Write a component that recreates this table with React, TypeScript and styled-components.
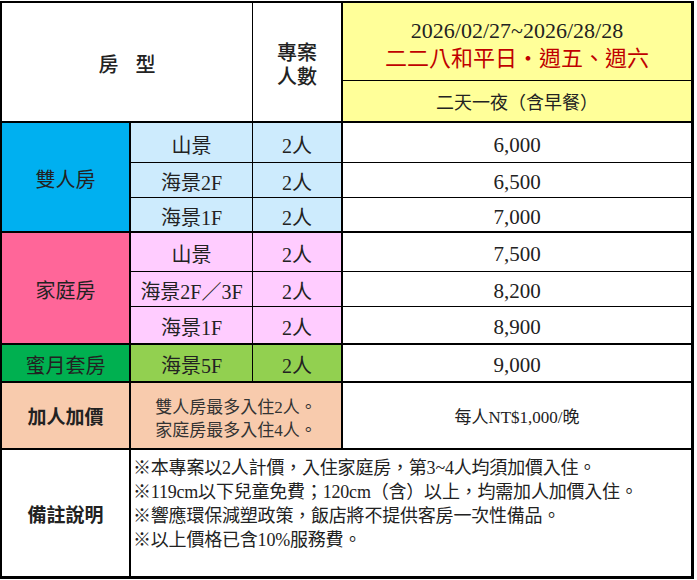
import React from "react";
import styled, { createGlobalStyle } from "styled-components";

const Global = createGlobalStyle`
  html, body { margin: 0; padding: 0; background: #fff; }
  body { font-family: "Liberation Serif", "Noto Sans CJK TC", serif; color: #222; }
`;

const Table = styled.div`
  display: grid;
  grid-template-columns: 129px 122px 90px 348px;
  grid-template-rows: 78px 42px 40px 35px 35px 39px 35px 38px 38px 67px 126px;
  width: max-content;
  margin-top: 1px;
  border-style: solid;
  border-color: #000;
  border-width: 2px 3px 3px 2px;
  background: #fff;
`;

type CellProps = {
  $area: string;
  $bg?: string;
  $bb?: number;
  $br?: number;
  $size?: number;
  $weight?: number;
};

const Cell = styled.div<CellProps>`
  grid-area: ${(p) => p.$area};
  box-sizing: border-box;
  display: flex;
  flex-direction: column;
  align-items: center;
  justify-content: center;
  text-align: center;
  padding-top: 6px;
  background: ${(p) => p.$bg ?? "#fff"};
  border-right: ${(p) => p.$br ?? 0}px solid #000;
  border-bottom: ${(p) => p.$bb ?? 0}px solid #000;
  font-size: ${(p) => p.$size ?? 20}px;
  font-weight: ${(p) => p.$weight ?? 400};
  line-height: 1.2;
  white-space: nowrap;
`;

const TitleText = styled.span`
  letter-spacing: 17px;
  padding-left: 17px;
  font-weight: 500;
`;

const StackText = styled.span`
  display: block;
  line-height: 24px;
  font-weight: 500;
`;

const DateLine = styled.div<{ $red?: boolean }>`
  font-size: 22px;
  line-height: 28px;
  color: ${(p) => (p.$red ? "#c00000" : "#222")};
`;

const AddText = styled.div`
  font-size: 17px;
  line-height: 23px;
  color: #333;
`;

const NoteCell = styled(Cell)`
  align-items: flex-start;
  justify-content: flex-start;
  text-align: left;
  padding: 6px 0 0 2px;
`;

const NoteLine = styled.div`
  font-size: 18px;
  line-height: 24px;
  letter-spacing: -0.2px;
  color: #222;
`;

const COLORS = {
  blue: "#00b0f0",
  blueLight: "#cdebfd",
  pink: "#ff6699",
  pinkLight: "#ffccff",
  green: "#00b050",
  greenLight: "#92d050",
  orange: "#f8cbad",
  yellow: "#ffff99",
};

type Room = { name: string; price: string };
type Group = { label: string; main: string; light: string; rooms: Room[] };

const groups: Group[] = [
  {
    label: "雙人房",
    main: COLORS.blue,
    light: COLORS.blueLight,
    rooms: [
      { name: "山景", price: "6,000" },
      { name: "海景2F", price: "6,500" },
      { name: "海景1F", price: "7,000" },
    ],
  },
  {
    label: "家庭房",
    main: COLORS.pink,
    light: COLORS.pinkLight,
    rooms: [
      { name: "山景", price: "7,500" },
      { name: "海景2F／3F", price: "8,200" },
      { name: "海景1F", price: "8,900" },
    ],
  },
  {
    label: "蜜月套房",
    main: COLORS.green,
    light: COLORS.greenLight,
    rooms: [{ name: "海景5F", price: "9,000" }],
  },
];

const notes = [
  "※本專案以2人計價，入住家庭房，第3~4人均須加價入住。",
  "※119cm以下兒童免費；120cm（含）以上，均需加人加價入住。",
  "※響應環保減塑政策，飯店將不提供客房一次性備品。",
  "※以上價格已含10%服務費。",
];

export default function App() {
  let row = 3;
  const body: React.ReactNode[] = [];
  groups.forEach((g, gi) => {
    const start = row;
    const end = row + g.rooms.length;
    body.push(
      <Cell key={`g${gi}`} $area={`${start} / 1 / ${end} / 2`} $bg={g.main} $br={2} $bb={2}>
        {g.label}
      </Cell>
    );
    g.rooms.forEach((r, ri) => {
      const last = ri === g.rooms.length - 1;
      const bb = last ? 2 : 1;
      const rr = start + ri;
      body.push(
        <Cell key={`n${gi}-${ri}`} $area={`${rr} / 2 / ${rr + 1} / 3`} $bg={g.light} $br={1} $bb={bb}>
          {r.name}
        </Cell>,
        <Cell key={`p${gi}-${ri}`} $area={`${rr} / 3 / ${rr + 1} / 4`} $bg={g.light} $br={2} $bb={bb}>
          2人
        </Cell>,
        <Cell key={`v${gi}-${ri}`} $area={`${rr} / 4 / ${rr + 1} / 5`} $bb={bb} $size={21}>
          {r.price}
        </Cell>
      );
    });
    row = end;
  });

  return (
    <>
      <Global />
      <Table>
        <Cell $area="1 / 1 / 3 / 3" $br={1} $bb={2}>
          <TitleText>房型</TitleText>
        </Cell>
        <Cell $area="1 / 3 / 3 / 4" $br={2} $bb={2}>
          <StackText>專案</StackText>
          <StackText>人數</StackText>
        </Cell>
        <Cell $area="1 / 4 / 2 / 5" $bg={COLORS.yellow} $bb={1}>
          <DateLine>2026/02/27~2026/28/28</DateLine>
          <DateLine $red>二二八和平日・週五、週六</DateLine>
        </Cell>
        <Cell $area="2 / 4 / 3 / 5" $bg={COLORS.yellow} $bb={2} $size={18}>
          二天一夜（含早餐）
        </Cell>
        {body}
        <Cell $area="10 / 1 / 11 / 2" $bg={COLORS.orange} $br={2} $bb={2} $size={19} $weight={700}>
          加人加價
        </Cell>
        <Cell $area="10 / 2 / 11 / 4" $bg={COLORS.orange} $br={2} $bb={2}>
          <AddText>雙人房最多入住2人。</AddText>
          <AddText>家庭房最多入住4人。</AddText>
        </Cell>
        <Cell $area="10 / 4 / 11 / 5" $bb={2} $size={17}>
          每人NT$1,000/晚
        </Cell>
        <Cell $area="11 / 1 / 12 / 2" $br={2} $size={19} $weight={700}>
          備註說明
        </Cell>
        <NoteCell $area="11 / 2 / 12 / 5">
          {notes.map((n) => (
            <NoteLine key={n}>{n}</NoteLine>
          ))}
        </NoteCell>
      </Table>
    </>
  );
}
